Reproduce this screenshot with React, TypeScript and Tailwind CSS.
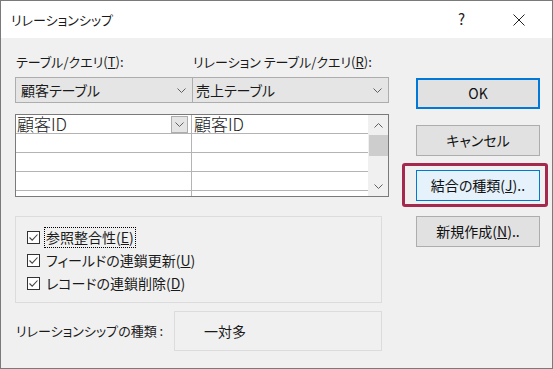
import React from "react";

// Access "リレーションシップ" dialog (Windows 10 look)

const FONT = "font-['Noto_Sans_CJK_JP','Noto_Sans',sans-serif] [font-feature-settings:'palt']";

function Chevron({ className = "" }: { className?: string }) {
  return (
    <svg width="9" height="5" viewBox="0 0 9 5" className={className}>
      <path d="M0.5 0.5 L4.5 4.5 L8.5 0.5" fill="none" stroke="#606060" strokeWidth="1" />
    </svg>
  );
}

function CheckRow({ label, mnemonic, focused }: { label: string; mnemonic: string; focused?: boolean }) {
  return (
    <div className="flex items-center h-[23px]">
      <span className="w-[13px] h-[13px] border border-[#333] bg-white flex items-center justify-center">
        <svg width="11" height="11" viewBox="0 0 11 11">
          <path d="M1.5 5.5 L4.2 8.2 L9.5 2.5" fill="none" stroke="#444" strokeWidth="1.1" />
        </svg>
      </span>
      <span
        className={`ml-[5px] px-[1px] leading-[19px] whitespace-nowrap ${focused ? "outline outline-1 outline-dotted outline-[#000]" : ""}`}
      >
        {label}(<u>{mnemonic}</u>)
      </span>
    </div>
  );
}

function DialogButton({ children, variant = "normal" }: { children: React.ReactNode; variant?: "normal" | "default" | "hover" }) {
  const cls =
    variant === "default"
      ? "border-2 border-[#0078d7] bg-[#e1e1e1] h-[31px]"
      : variant === "hover"
      ? "border border-[#0078d7] bg-[#e5f1fb] h-[31px]"
      : "border border-[#adadad] bg-[#e1e1e1] h-[31px]";
  return (
    <div className={`w-[124px] flex items-center justify-center text-[14px] text-[#111] whitespace-nowrap ${cls}`}>
      {children}
    </div>
  );
}

export default function App() {
  return (
    <div className={`w-[553px] h-[369px] border border-[#7a7a7a] flex flex-col text-[#1a1a1a] ${FONT}`}>
      {/* Title bar */}
      <div className="h-[37px] bg-white flex items-center shrink-0">
        <span className="ml-[10px] text-[13px]">リレーションシップ</span>
        <span className="ml-auto mr-[48px] text-[15px] text-[#222]">?</span>
        <svg width="12" height="12" viewBox="0 0 12 12" className="mr-[27px]">
          <path d="M0.5 0.5 L11.5 11.5 M11.5 0.5 L0.5 11.5" stroke="#222" strokeWidth="1" />
        </svg>
      </div>

      {/* Body */}
      <div className="flex-1 bg-[#f0f0f0] flex pl-[14px] pt-[14px]">
        {/* Left column */}
        <div className="w-[374px] flex flex-col text-[13px]">
          <div className="h-[20px] flex items-center whitespace-nowrap">
            <span className="w-[178px] pl-[1px]">
              テーブル/クエリ(<u>T</u>):
            </span>
            <span>
              リレーション テーブル/クエリ(<u>R</u>):
            </span>
          </div>

          {/* Combos */}
          <div className="mt-[5px] h-[26px] flex border border-[#adadad] bg-[#e5e5e5] text-[14px]">
            <div className="w-[177px] flex items-center border-r border-[#adadad] pl-[5px] pr-[6px]">
              <span>顧客テーブル</span>
              <Chevron className="ml-auto" />
            </div>
            <div className="flex-1 flex items-center pl-[3px] pr-[6px]">
              <span>売上テーブル</span>
              <Chevron className="ml-auto" />
            </div>
          </div>

          {/* Field grid */}
          <div className="mt-[11px] h-[83px] border border-[#7a7a7a] bg-white flex">
            <div className="flex-1 flex flex-col">
              {[0, 1, 2, 3, 4].map((i) => (
                <div
                  key={i}
                  className={`flex ${i < 4 ? "h-[19px] border-b border-[#b4b4b4]" : "flex-1"}`}
                >
                  <div className="w-[176px] border-r border-[#b4b4b4] flex items-center">
                    {i === 0 && (
                      <>
                        <span className="pl-[1px] text-[17px] font-light leading-[18px]">顧客ID</span>
                        <span className="ml-auto mr-[3px] w-[17px] h-[17px] border border-[#adadad] bg-[#e5e5e5] flex items-center justify-center">
                          <Chevron />
                        </span>
                      </>
                    )}
                  </div>
                  <div className="flex-1 flex items-center">
                    {i === 0 && <span className="pl-[2px] text-[17px] font-light leading-[18px]">顧客ID</span>}
                  </div>
                </div>
              ))}
            </div>
            {/* Scrollbar */}
            <div className="w-[20px] bg-[#f0f0f0] flex flex-col items-center">
              <div className="h-[20px] flex items-center justify-center">
                <Chevron className="rotate-180" />
              </div>
              <div className="w-[19px] h-[21px] bg-[#cdcdcd]" />
              <div className="flex-1" />
              <div className="h-[20px] flex items-center justify-center">
                <Chevron />
              </div>
            </div>
          </div>

          {/* Options group */}
          <div className="mt-[19px] w-[367px] h-[87px] border border-[#dcdcdc] flex flex-col pl-[11px] pt-[9px] text-[14px]">
            <CheckRow label="参照整合性" mnemonic="E" focused />
            <CheckRow label="フィールドの連鎖更新" mnemonic="U" />
            <CheckRow label="レコードの連鎖削除" mnemonic="D" />
          </div>

          {/* Relationship type */}
          <div className="mt-[8px] h-[40px] flex items-center">
            <span className="w-[159px] pl-[1px] whitespace-nowrap">リレーションシップの種類 :</span>
            <div className="w-[208px] h-[40px] border border-[#dcdcdc] flex items-center pl-[29px] text-[14px]">
              一対多
            </div>
          </div>
        </div>

        {/* Right column: buttons */}
        <div className="ml-[27px] flex flex-col pt-[26px]">
          <DialogButton variant="default">OK</DialogButton>
          <div className="mt-[16px]">
            <DialogButton>キャンセル</DialogButton>
          </div>
          <div className="mt-[14px] relative">
            <DialogButton variant="hover">
              結合の種類(<u>J</u>)..
            </DialogButton>
            {/* highlight annotation */}
            <div className="absolute left-[-14px] top-[-7px] w-[146px] h-[44px] border-[3px] border-[#a5294f] rounded-[3px]" />
          </div>
          <div className="mt-[15px]">
            <DialogButton>
              新規作成(<u>N</u>)..
            </DialogButton>
          </div>
        </div>
      </div>
    </div>
  );
}
